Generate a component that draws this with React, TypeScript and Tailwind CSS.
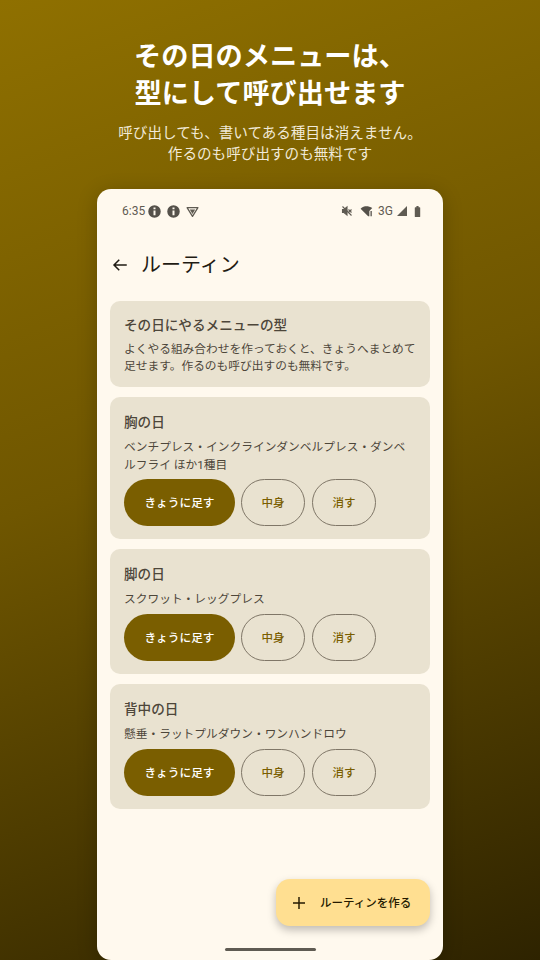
const font = { fontFamily: '"Roboto", "Noto Sans CJK JP", sans-serif' };

function Info() {
  return (
    <svg viewBox="0 0 24 24" className="w-[15px] h-[15px]" fill="#55514a">
      <path d="M12 2a10 10 0 1 0 0 20 10 10 0 0 0 0-20Zm1.6 16h-3.200v-7.500h3.200V18Zm0-9.500h-3.200V5.700h3.200v2.800Z" fillRule="evenodd" />
    </svg>
  );
}

function Routine({ title, body }: { title: string; body: React.ReactNode }) {
  return (
    <div className="bg-[#e9e2d0] rounded-[10px] min-h-[125px] px-[14px] pt-[15px] pb-[13px]">
      <div className="text-[13.6px] leading-[20px] font-medium text-[#4d463a]">{title}</div>
      <div className="mt-[7px] text-[11.72px] leading-[17.5px] text-[#4d463a]">{body}</div>
      <div className="mt-[5px] flex">
        <button className="w-[111px] h-[47px] pt-[3px] rounded-full bg-[#7a5e00] text-white text-[11.7px] font-medium">きょうに足す</button>
        <button className="ml-[6px] w-[64px] h-[47px] pt-[3px] rounded-full border border-[#7f7667] text-[#7a5e00] text-[11.5px] font-medium">中身</button>
        <button className="ml-[7px] w-[64px] h-[47px] pt-[3px] rounded-full border border-[#7f7667] text-[#7a5e00] text-[11.5px] font-medium">消す</button>
      </div>
    </div>
  );
}

export default function App() {
  return (
    <div style={font} className="w-[540px] h-[960px] overflow-hidden flex flex-col items-center bg-[linear-gradient(160deg,#8f7000_0%,#6f5600_45%,#2e2300_100%)]">
      <h1 className="mt-[39px] text-center text-white text-[27.2px] leading-[37px] font-bold">
        その日のメニューは、<br />型にして呼び出せます
      </h1>
      <p className="mt-[10px] text-center text-[#f1ead8] text-[14.6px] leading-[21px]">
        呼び出しても、書いてある種目は消えません。<br />作るのも呼び出すのも無料です
      </p>
      <div className="relative mt-[24px] w-[346px] h-[771px] shrink-0 rounded-[14px] bg-[#fff9ee] shadow-[0_4px_20px_rgba(0,0,0,0.22)]">
        <div className="h-[44px] pl-[25px] pr-[19px] flex items-center justify-between text-[12px] text-[#5f5b52]">
          <div className="flex items-center">
            <span>6:35</span>
            <span className="ml-[2px]"><Info /></span>
            <span className="ml-[4px]"><Info /></span>
            <svg viewBox="0 0 24 24" className="w-[13px] h-[13px] ml-[5px]" fill="none" stroke="#5f5b52" strokeWidth="2.400" strokeLinejoin="round">
              <path d="M2 5h20l-10 16L2 5Z" />
              <path d="M7 8.500h10l-5 8Z" fill="#5f5b52" stroke="none" />
            </svg>
          </div>
          <div className="flex items-center">
            <svg viewBox="0 0 24 24" className="w-[12px] h-[12px]" fill="none" stroke="#5f5b52" strokeWidth="2.200">
              <path d="M3 9v6h3l6 5V4L6 9H3Z" fill="#5f5b52" />
              <path d="M15 9l6 6M21 9l-6 6M3 3l18 18" />
            </svg>
            <svg viewBox="0 0 24 24" className="w-[14px] h-[14px] ml-[7px]" fill="#55514a">
              <path d="M1 8c3-3 7-4 10-4s7 1 10 3l-5 5v9h-2L1 8Z" />
              <rect x="18" y="12" width="2.200" height="9" />
            </svg>
            <span className="ml-[4px]">3G</span>
            <svg viewBox="0 0 24 24" className="w-[12px] h-[12px] ml-[3px]" fill="#5f5b52"><path d="M22 2v20H2L22 2Z" /></svg>
            <svg viewBox="0 0 24 24" className="w-[13px] h-[13px] ml-[3px]" fill="#5f5b52"><path d="M8 4h2V2h4v2h2a1 1 0 0 1 1 1v16a1 1 0 0 1-1 1H8a1 1 0 0 1-1-1V5a1 1 0 0 1 1-1Z" /></svg>
          </div>
        </div>
        <div className="h-[68px] pl-[14px] pb-[4px] flex items-center gap-[12px]">
          <svg viewBox="0 0 24 24" className="w-[18px] h-[18px]" fill="none" stroke="#1f1b13" strokeWidth="2">
            <path d="M21 12H4M11 5l-7 7 7 7" />
          </svg>
          <span className="text-[20px] text-[#1f1b13]">ルーティン</span>
        </div>
        <div className="px-[13px] flex flex-col gap-[10px]">
          <div className="bg-[#e9e2d0] rounded-[10px] h-[86px] px-[14px] pt-[14px]">
            <div className="text-[13.6px] leading-[20px] font-medium text-[#4d463a]">その日にやるメニューの型</div>
            <div className="mt-[6px] text-[11.72px] leading-[17px] text-[#4d463a]">よくやる組み合わせを作っておくと、きょうへまとめて<br />足せます。作るのも呼び出すのも無料です。</div>
          </div>
          <Routine title="胸の日" body={<>ベンチプレス・インクラインダンベルプレス・ダンベ<br />ルフライ ほか1種目</>} />
          <Routine title="脚の日" body="スクワット・レッグプレス" />
          <Routine title="背中の日" body="懸垂・ラットプルダウン・ワンハンドロウ" />
        </div>
        <button className="absolute left-[179px] top-[690px] w-[154px] h-[47px] rounded-[14px] bg-[#ffdf91] shadow-[0_4px_8px_rgba(0,0,0,0.25)] flex items-center pl-[15px] gap-[13px] text-[11.5px] font-medium text-[#251a00]">
          <svg viewBox="0 0 24 24" className="w-[16px] h-[16px]" fill="none" stroke="#251a00" strokeWidth="2.200"><path d="M12 3v18M3 12h18" /></svg>
          <span className="pt-[2px]">ルーティンを作る</span>
        </button>
        <div className="absolute left-[128px] top-[759px] w-[91px] h-[3px] rounded-full bg-[#5f5b52]" />
      </div>
    </div>
  );
}
